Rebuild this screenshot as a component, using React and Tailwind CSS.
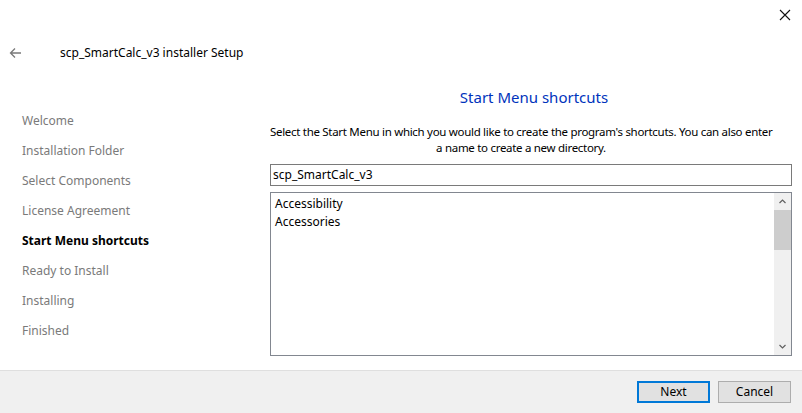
import React from "react";

const steps = [
  "Welcome",
  "Installation Folder",
  "Select Components",
  "License Agreement",
  "Start Menu shortcuts",
  "Ready to Install",
  "Installing",
  "Finished",
];

const font = { fontFamily: '"Noto Sans", "Open Sans", sans-serif' };

export default function App() {
  const active = "Start Menu shortcuts";
  return (
    <div className="w-[802px] h-[413px] bg-white flex flex-col text-[12px] text-black overflow-hidden" style={font}>
      <div className="h-[40px] flex justify-end items-start">
        <button className="w-[30px] h-[30px] mr-[2px] flex items-center justify-center">
          <svg width="12" height="12" viewBox="0 0 12 12">
            <path d="M1 1L11 11M11 1L1 11" stroke="#111" strokeWidth="1.1" />
          </svg>
        </button>
      </div>

      <div className="h-[26px] flex items-center">
        <svg className="ml-[9px]" width="13" height="12" viewBox="0 0 13 12">
          <path d="M12 6H1.5M6 1.5L1.5 6L6 10.5" stroke="#7a7a7a" strokeWidth="1.3" fill="none" />
        </svg>
        <span className="ml-[38px]">scp_SmartCalc_v3 installer Setup</span>
      </div>

      <div className="flex-1 flex">
        <div className="w-[270px] pl-[22px] pt-[40px] flex flex-col">
          {steps.map((s) => (
            <div
              key={s}
              className={`h-[30px] flex items-center ${s === active ? "font-bold text-black" : "text-[#7a7a7a]"}`}
            >
              {s}
            </div>
          ))}
        </div>

        <div className="w-[522px] flex flex-col pt-[19px]">
          <div className="text-center text-[15px] text-[#0033bc] h-[24px] leading-[24px] pl-[6px]">Start Menu shortcuts</div>
          <div className="text-center leading-[16px] mt-[15px] pr-[20px] text-[11.5px] tracking-[-0.3px] whitespace-nowrap">
            Select the Start Menu in which you would like to create the program's shortcuts. You can also enter
            <br />
            a name to create a new directory.
          </div>
          <div className="mt-[8px] h-[22px] border border-[#7a7a7a] flex items-center px-[2px]">scp_SmartCalc_v3</div>
          <div className="mt-[6px] h-[164px] border border-[#828790] flex">
            <div className="flex-1 pl-[4px] pt-[2px] leading-[18px]">
              <div>Accessibility</div>
              <div>Accessories</div>
            </div>
            <div className="w-[17px] bg-[#f0f0f0] flex flex-col items-center">
              <div className="h-[17px] flex items-center justify-center">
                <svg width="7" height="5" viewBox="0 0 7 5">
                  <path d="M0.5 4L3.5 1L6.5 4" stroke="#606060" strokeWidth="1.2" fill="none" />
                </svg>
              </div>
              <div className="w-[17px] h-[40px] bg-[#cdcdcd]" />
              <div className="flex-1" />
              <div className="h-[17px] flex items-center justify-center">
                <svg width="7" height="5" viewBox="0 0 7 5">
                  <path d="M0.5 1L3.5 4L6.5 1" stroke="#606060" strokeWidth="1.2" fill="none" />
                </svg>
              </div>
            </div>
          </div>
        </div>
      </div>

      <div className="h-[43px] bg-[#f0f0f0] border-t border-[#dfdfdf] flex items-center justify-end pr-[11px] gap-[8px]">
        <button className="w-[73px] h-[22px] bg-[#e1e1e1] border-2 border-[#0078d7] leading-none">Next</button>
        <button className="w-[73px] h-[22px] bg-[#e1e1e1] border border-[#adadad] leading-none">Cancel</button>
      </div>
    </div>
  );
}
